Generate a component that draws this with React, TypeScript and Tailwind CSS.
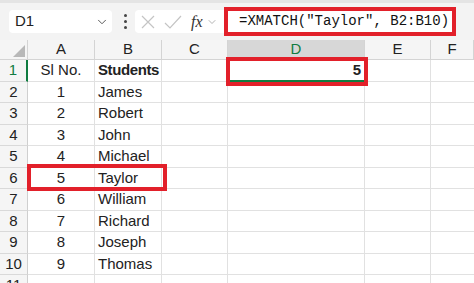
import { ChevronDown } from "lucide-react";

const cols = ["A", "B", "C", "D", "E", "F"];

const students = [
  ["Sl No.", "Students"],
  ["1", "James"],
  ["2", "Robert"],
  ["3", "John"],
  ["4", "Michael"],
  ["5", "Taylor"],
  ["6", "William"],
  ["7", "Richard"],
  ["8", "Joseph"],
  ["9", "Thomas"],
  ["", ""],
];

function FormulaBar() {
  return (
    <div className="flex h-[37px] items-center">
      {/* name box */}
      <div className="ml-[9px] flex h-[23px] w-[103px] items-center justify-between rounded-[4px] bg-white pl-[6px] pr-[3px] text-[15px] text-[#222]">
        <span>D1</span>
        <ChevronDown size={14} strokeWidth={1.5} className="text-[#444]" />
      </div>
      <div className="ml-[11px] flex w-[4px] flex-col items-center gap-[3px]">
        <span className="h-[3px] w-[3px] rounded-full bg-[#444]" />
        <span className="h-[3px] w-[3px] rounded-full bg-[#444]" />
        <span className="h-[3px] w-[3px] rounded-full bg-[#444]" />
      </div>
      {/* cancel / enter / fx */}
      <div className="ml-[8px] flex h-[23px] w-[95px] items-center rounded-l-[4px] bg-white pl-[5px]">
        <svg width="14" height="14" viewBox="0 0 14 14" className="ml-[1px]">
          <path d="M1 1 L13 13 M13 1 L1 13" stroke="#c4c4c4" strokeWidth="1.2" fill="none" />
        </svg>
        <svg width="18" height="14" viewBox="0 0 18 14" className="ml-[9px]">
          <path d="M1 8 L6 13 L17 1" stroke="#c4c4c4" strokeWidth="1.2" fill="none" />
        </svg>
        <span className="ml-[9px] font-['Liberation_Serif',serif] text-[16px] italic leading-none text-[#333]">fx</span>
        <ChevronDown size={12} strokeWidth={1.5} className="ml-[3px] text-[#999]" />
      </div>
      {/* formula input */}
      <div className="-ml-[6px] flex h-[29px] w-[232px] items-center border-4 border-[#e2202a] bg-white pl-[11px] font-['Liberation_Mono',monospace] text-[14px] text-[#111]">
        =XMATCH("Taylor", B2:B10)
      </div>
    </div>
  );
}

function Sheet() {
  return (
    <div className="grid grid-cols-[28px_67px_67px_66px_137px_66px_1fr] bg-white font-['Liberation_Sans',Arial,sans-serif] text-[15px] text-[#222]">
      {/* header row, select-all corner */}
      <div className="flex h-[20px] items-end justify-end border-r border-b border-[#d4d4d4] bg-[#f5f5f5] pr-[2px] pb-[2px]">
        <div className="h-0 w-0 border-b-[12px] border-l-[12px] border-b-[#b8b8b8] border-l-transparent" />
      </div>
      {cols.map((c) =>
        c === "D" ? (
          <div
            key={c}
            className="flex h-[20px] items-center justify-center border-r border-b-2 border-r-[#d4d4d4] border-b-[#107c41] bg-[#d7d7d7] text-[#107c41]"
          >
            {c}
          </div>
        ) : (
          <div
            key={c}
            className="flex h-[20px] items-center justify-center border-r border-b border-[#d4d4d4] bg-[#f5f5f5]"
          >
            {c}
          </div>
        )
      )}

      {students.map((r, i) => (
        <Row key={i} n={i + 1} a={r[0]} b={r[1]} />
      ))}
    </div>
  );
}

function Row({ n, a, b }: { n: number; a: string; b: string }) {
  const first = n === 1;
  return (
    <>
      <div
        className={`flex h-[21.5px] items-center justify-center border-b border-[#d9d9d9] bg-[#f5f5f5] ${
          first ? "border-r-2 border-r-[#107c41] bg-[#d7d7d7] text-[#107c41]" : "border-r border-r-[#cfcfcf]"
        }`}
      >
        {n}
      </div>
      <div className="flex h-[21.5px] items-center justify-center border-r border-b border-[#e1e1e1]">{a}</div>
      <div className={`flex h-[21.5px] items-center border-r border-b border-[#e1e1e1] pl-[3px] ${first ? "font-bold tracking-[-0.4px]" : ""}`}>
        {b}
      </div>
      <div className="h-[21.5px] border-r border-b border-[#e1e1e1]" />
      <div
        className={`flex h-[21.5px] items-center justify-end pr-[4px] ${
          first ? "border-b-2 border-[#107c41] font-bold" : "border-r border-b border-[#e1e1e1]"
        }`}
      >
        {first ? "5" : ""}
      </div>
      <div className="h-[21.5px] border-r border-b border-[#e1e1e1]" />
      <div className="h-[21.5px] border-b border-[#e1e1e1]" />
    </>
  );
}

export default function App() {
  return (
    <div className="relative h-[283px] w-[474px] overflow-hidden bg-[#f3f3f3] font-['Liberation_Sans',Arial,sans-serif]">
      <div className="h-[3px] bg-[#e4e4e4]" />
      <FormulaBar />
      <Sheet />
      {/* annotation boxes */}
      <div className="absolute left-[226px] top-[57px] h-[29px] w-[142px] border-4 border-[#e2202a]" />
      <div className="absolute left-[27px] top-[164px] h-[27px] w-[140px] border-4 border-[#e2202a]" />
    </div>
  );
}
